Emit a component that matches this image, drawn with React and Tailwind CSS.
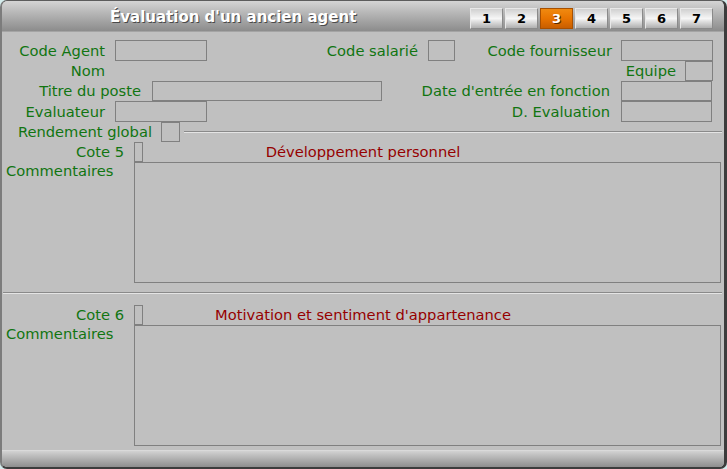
import React from "react";

const FIELD = "border border-[#808080]";

export default function App() {
  const tabs = [1, 2, 3, 4, 5, 6, 7];
  return (
    <div className="w-[727px] h-[469px] bg-[#d4ecec]">
      <div
        className="w-[727px] h-[469px] flex flex-col bg-[#c0c0c0] rounded-[7px] overflow-hidden border-t border-t-[#5c5c5c] border-l-2 border-l-[#7c7c7c] border-r-[3px] border-r-[#3c3c3c] border-b-2 border-b-[#3c3c3c] text-[14.7px] leading-[18px] text-[#117511]"
        style={{ fontFamily: '"DejaVu Sans", Verdana, sans-serif' }}
      >
        {/* Title bar */}
        <div className="h-[31px] shrink-0 flex items-start bg-linear-to-b from-[#d4d4d4] to-[#8c8c8c] border-b border-b-[#a4a4a4]">
          <div className="ml-[108px] mt-[7px] text-white font-bold text-[15px] leading-[18px] [text-shadow:1px_1px_0_#4a4a4a]">
            Évaluation d'un ancien agent
          </div>
          <div className="ml-auto mr-[11px] mt-[7px] flex gap-[2px]">
            {tabs.map((n) => (
              <div
                key={n}
                className={
                  n === 3
                    ? "w-[33px] h-[21px] flex items-center justify-center text-[13px] font-bold text-white [text-shadow:1px_1px_0_#5a2a00] border border-[#a85000] bg-linear-to-b from-[#f08a10] via-[#e87400] to-[#c85e00]"
                    : "w-[33px] h-[21px] flex items-center justify-center text-[13px] font-bold text-black border border-t-[#e8e8e8] border-l-[#e8e8e8] border-r-[#8a8a8a] border-b-[#8a8a8a] bg-linear-to-b from-[#d0d0d0] via-[#f6f6f6] to-[#b0b0b0]"
                }
              >
                {n}
              </div>
            ))}
          </div>
        </div>

        {/* Body */}
        <div className="flex-1 flex flex-col pt-[8px]">
          {/* Row 1 */}
          <div className="flex items-center h-[21px]">
            <div className="w-[103px] text-right">Code Agent</div>
            <div className={`ml-[10px] w-[92px] h-[21px] ${FIELD}`} />
            <div className="w-[211px] text-right">Code salarié</div>
            <div className={`ml-[10px] w-[27px] h-[21px] ${FIELD}`} />
            <div className="w-[157px] text-right">Code fournisseur</div>
            <div className={`ml-[9px] w-[92px] h-[21px] ${FIELD}`} />
          </div>
          {/* Row 2 */}
          <div className="flex items-center h-[20px]">
            <div className="w-[103px] text-right">Nom</div>
            <div className="w-[571px] text-right">Equipe</div>
            <div className={`ml-[9px] w-[28px] h-[20px] ${FIELD}`} />
          </div>
          {/* Row 3 */}
          <div className="flex items-center h-[20px]">
            <div className="w-[139px] text-right">Titre du poste</div>
            <div className={`ml-[11px] w-[230px] h-[20px] ${FIELD}`} />
            <div className="w-[228px] text-right">Date d'entrée en fonction</div>
            <div className={`ml-[11px] w-[91px] h-[20px] ${FIELD}`} />
          </div>
          {/* Row 4 */}
          <div className="flex items-center h-[21px]">
            <div className="w-[103px] text-right">Evaluateur</div>
            <div className={`ml-[10px] w-[92px] h-[21px] ${FIELD}`} />
            <div className="w-[403px] text-right">D. Evaluation</div>
            <div className={`ml-[11px] w-[91px] h-[21px] ${FIELD}`} />
          </div>
          {/* Row 5 */}
          <div className="flex items-center h-[20px]">
            <div className="w-[150px] text-right">Rendement global</div>
            <div className={`ml-[9px] w-[19px] h-[20px] ${FIELD}`} />
            <div className="ml-[4px] mr-[2px] flex-1 h-[2px] border-t border-t-[#8a8a8a] border-b border-b-[#e4e4e4]" />
          </div>
          {/* Row 6 */}
          <div className="flex items-center h-[20px]">
            <div className="w-[122px] text-right">Cote 5</div>
            <div className={`ml-[10px] w-[9px] h-[20px] ${FIELD}`} />
            <div className="w-[440px] text-center text-[#960000]">Développement personnel</div>
          </div>
          {/* Comments 1 */}
          <div className="flex items-start">
            <div className="w-[132px] pl-[4px]">Commentaires</div>
            <div className={`w-[587px] h-[121px] ${FIELD}`} />
          </div>

          <div className="mt-[9px] ml-[1px] mr-[2px] h-[2px] border-t border-t-[#8a8a8a] border-b border-b-[#e4e4e4]" />

          {/* Row Cote 6 */}
          <div className="mt-[11px] flex items-center h-[20px]">
            <div className="w-[122px] text-right">Cote 6</div>
            <div className={`ml-[10px] w-[9px] h-[20px] ${FIELD}`} />
            <div className="w-[440px] text-center text-[#960000]">Motivation et sentiment d'appartenance</div>
          </div>
          {/* Comments 2 */}
          <div className="flex items-start">
            <div className="w-[132px] pl-[4px]">Commentaires</div>
            <div className={`w-[587px] h-[121px] ${FIELD}`} />
          </div>
        </div>

        {/* Bottom bar */}
        <div className="h-[17px] shrink-0 bg-linear-to-b from-[#d2d2d2] to-[#8e8e8e] border-t border-t-[#dadada]" />
      </div>
    </div>
  );
}
